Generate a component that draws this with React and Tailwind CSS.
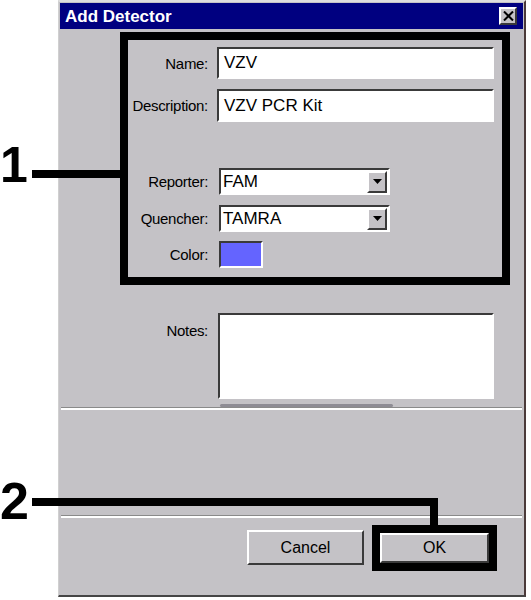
import React from 'react';

const sunkenEdge =
  'border-2 border-t-[#3a3a3a] border-l-[#3a3a3a] border-b-white border-r-white';
const sunken = `${sunkenEdge} bg-white`;
const raised =
  'border-2 border-t-white border-l-white border-b-[#3a3a3a] border-r-[#3a3a3a] bg-[#c4c2c6]';

function Field({ label, children, className = '' }) {
  return (
    <div className={`flex items-center ${className}`}>
      <div className="w-[80px] text-right text-[15px] text-black leading-none tracking-[-0.3px]">
        {label}
      </div>
      {children}
    </div>
  );
}

function Combo({ value }) {
  return (
    <div className={`ml-[11px] w-[171px] h-[27px] flex items-center ${sunken}`}>
      <span className="flex-1 pl-[2px] text-[17px] leading-none text-black">{value}</span>
      <div className={`w-[20px] h-[22px] mr-px flex items-center justify-center ${raised}`}>
        <svg width="9" height="5" viewBox="0 0 9 5">
          <path d="M0 0h9L4.5 5z" fill="#000" />
        </svg>
      </div>
    </div>
  );
}

export default function App() {
  return (
    <div
      className="relative w-[531px] h-[600px] bg-white overflow-hidden"
      style={{ fontFamily: '"Liberation Sans", Arial, sans-serif' }}
    >
      <div className="ml-[58px] w-[468px] h-[597px] flex flex-col bg-[#c4c2c6] border-t-2 border-t-[#dedede] border-l border-l-[#d0d0d0] border-r-2 border-r-[#4b3a3a] border-b-2 border-b-[#454545] pt-px">
        <div className="mx-px h-[26px] bg-[#000080] flex items-center justify-between pl-[5px] pr-[6px]">
          <span className="text-white font-bold text-[17px] leading-none">Add Detector</span>
          <div className={`w-[18px] h-[18px] flex items-center justify-center ${raised}`}>
            <svg width="11" height="10" viewBox="0 0 11 10">
              <path d="M1 0.5l9 9M10 0.5l-9 9" stroke="#000" strokeWidth="2" />
            </svg>
          </div>
        </div>

        <div className="mt-[3px] ml-[61px] w-[390px] h-[253px] border-[8px] border-black flex flex-col pt-[7px]">
          <Field label="Name:">
            <div className={`ml-[9px] w-[277px] h-[32px] flex items-center pl-[5px] text-[17px] text-black ${sunken}`}>
              VZV
            </div>
          </Field>
          <Field label="Description:" className="mt-[10px]">
            <div className={`ml-[9px] w-[277px] h-[33px] flex items-center pl-[5px] text-[17px] text-black ${sunken}`}>
              VZV PCR Kit
            </div>
          </Field>
          <Field label="Reporter:" className="mt-[46px]">
            <Combo value="FAM" />
          </Field>
          <Field label="Quencher:" className="mt-[10px]">
            <Combo value="TAMRA" />
          </Field>
          <Field label="Color:" className="mt-[9px]">
            <div className={`ml-[11px] w-[44px] h-[27px] bg-[#6464ff] ${sunkenEdge}`} />
          </Field>
        </div>

        <div className="mt-[28px] ml-[69px] flex items-start">
          <div className="w-[80px] pt-[10px] text-right text-[15px] leading-none text-black tracking-[-0.3px]">
            Notes:
          </div>
          <div className={`ml-[10px] w-[276px] h-[86px] ${sunken}`} />
        </div>

        <div className="mt-[5px] ml-[161px] w-[173px] h-[3px] bg-[#8e8c94] rounded-sm" />
        <div className="mx-[2px] border-t border-t-[#8a8a8a] border-b-2 border-b-white" />

        <div className="mt-[105px] mx-[2px] border-t border-t-[#8a8a8a] border-b-2 border-b-white" />

        <div className="ml-[188px] flex items-start">
          <div className={`mt-[12px] w-[117px] h-[35px] flex items-center justify-center text-[16px] text-black ${raised}`}>
            Cancel
          </div>
          <div className="mt-[7px] ml-[8px] w-[125px] h-[46px] border-[8px] border-black">
            <div className={`w-full h-full flex items-center justify-center text-[16px] text-black ${raised}`}>
              OK
            </div>
          </div>
        </div>
      </div>

      <div className="absolute left-0 top-[140px] text-[50px] font-bold leading-none text-black">1</div>
      <div className="absolute left-[32px] top-[170px] w-[88px] h-[8px] bg-black" />

      <div className="absolute left-0 top-[475px] text-[52px] font-bold leading-none text-black">2</div>
      <div className="absolute left-[32px] top-[498px] w-[406px] h-[8px] bg-black" />
      <div className="absolute left-[430px] top-[498px] w-[8px] h-[29px] bg-black" />
    </div>
  );
}
